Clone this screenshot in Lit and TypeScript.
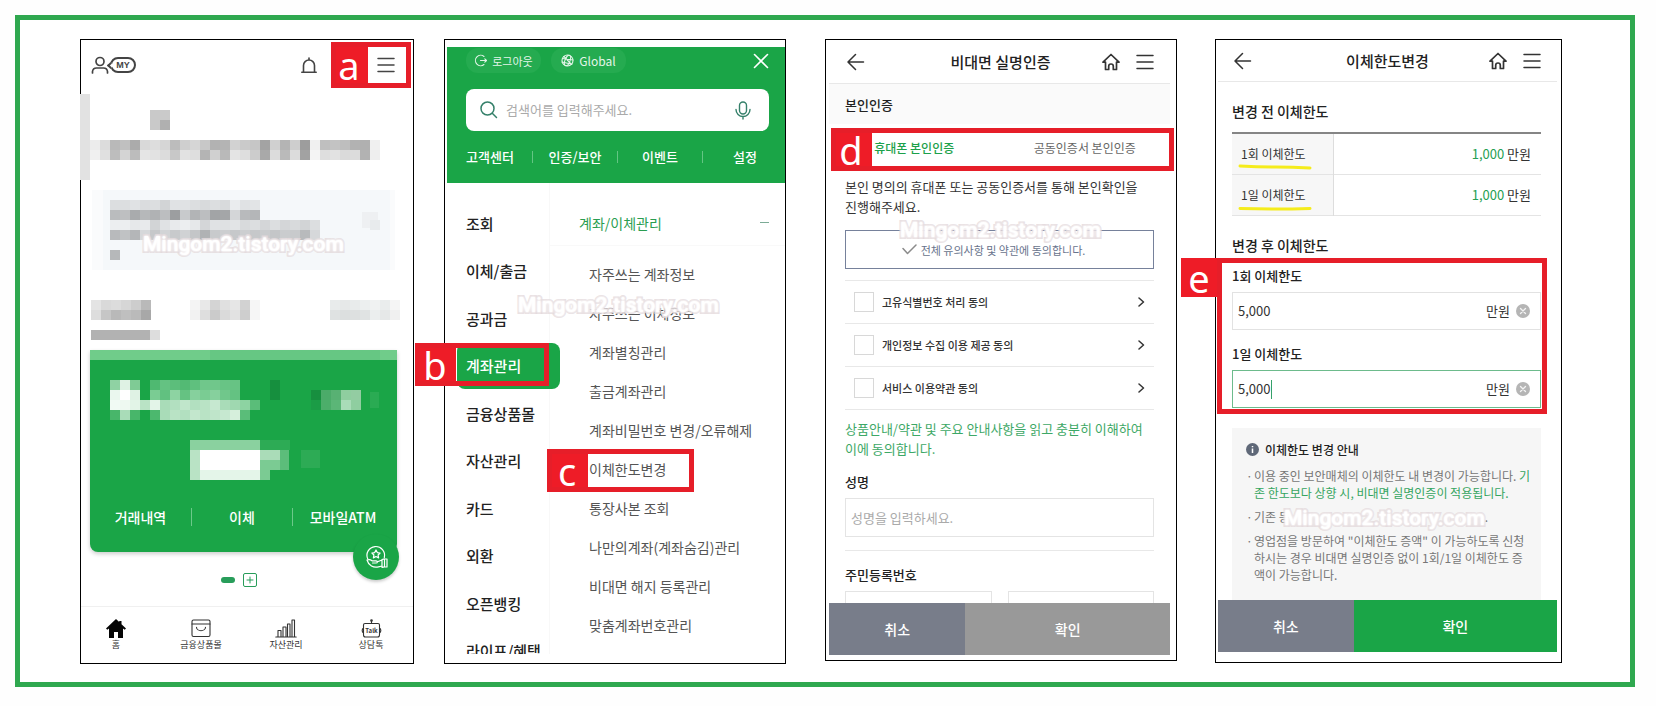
import { LitElement, html, svg, css, nothing } from "lit";
import { customElement } from "lit/decorators.js";
import { classMap } from "lit/directives/class-map.js";

type Block = [number, number, number, number, string];

const drawBlocks = (blocks: Block[]) =>
  blocks.map(([x, y, w, h, fill]) => svg`<rect x=${x} y=${y} width=${w} height=${h} fill=${fill}></rect>`);

/* One row of 10px cells, left to right. */
const strip = (y: number, x: number, shades: string): Block[] =>
  shades.split(" ").map((s, i) => [x + i * 10, y, 10, 10, "#" + s] as Block);

/* Pixelated area above the account card. */
const topBlocks: Block[] = [
  [80, 94, 10, 86, "#e2e2e2"],
  [150, 110, 10, 20, "#c9c9c9"], [160, 110, 10, 10, "#cacaca"], [160, 120, 10, 10, "#b0b0b0"],
  ...strip(140, 90, "ececec dcdcdc b9b9b9 c0c0c0 ababab d9d9d9 dddddd d6d6d6 bcbcbc cfcfcf d6d6d6 c8c8c8 b2b2b2 b4b4b4 d2d2d2 cacaca c6c6c6 a3a3a3 d0d0d0 b4b4b4 cecece 9d9d9d f0f0f0 bfbfbf c3c3c3 bebebe b2b2b2 b0b0b0 f0f0f0"),
  ...strip(150, 90, "f0f0f0 e0e0e0 bdbdbd d4d4d4 bcbcbc e5e5e5 e2e2e2 dcdcdc c8c8c8 e2e2e2 dedede b4b4b4 d0d0d0 b9b9b9 e4e4e4 dedede cccccc a9a9a9 dcdcdc bababa dcdcdc a2a2a2 f4f4f4 dedede e2e2e2 dadada dcdcdc b2b2b2 eeeeee"),
  [92, 190, 303, 80, "#fafbfc"], [103, 190, 287, 80, "#f5f8fa"],
  ...strip(200, 110, "dcdee0 dcdee0 e0e2e4 dadcde dcdee0 d2d4d6 e0e2e4 e0e2e4 dcdee0 d8dadc dcdee0 d8dadc eaecee e0e2e4 e2e4e6"),
  ...strip(210, 110, "babcbe bebfc1 a9abad b6b8ba b0b2b4 bcbec0 9c9ea0 c8cacc b2b4b6 bcbec0 a2a4a6 a4a6a8 d4d6d8 b8babc b4b6b8"),
  ...strip(220, 110, "eceef0 eceef0 e6e8ea e8eaec d2d4d6 e0e2e4 e8eaec eceef0 e6e8ea d4d6d8 e0e2e4 dfe1e3 e2e4e6 d8dadc dcdee0 d4d6d8 dcdee0 d4d6d8 d8dadc d2d4d6 dcdee0"),
  ...strip(230, 110, "b8babc c0c2c4 b4b6b8 d6d8da c6c8ca d2d4d6 c8cacc d0d2d4 c4c6c8 b0b2b4 c8cacc ccced0 c6c8ca ccced0 c6c8ca caccce c4c6c8 caccce c8cacc b8babc d6d8da"),
  [110, 250, 10, 10, "#b6b8ba"], [362, 212, 16, 16, "#eef0f2"], [370, 220, 10, 10, "#e8ebed"],
  ...strip(300, 91, "e4e4e4 d9d9d9 dcdcdc d6d6d6 cdcdcd b9b9b9"),
  ...strip(310, 91, "dddddd c6c6c6 b9b9b9 bfbfbf bababa a8a8a8"),
  ...strip(300, 190, "f4f4f4 e8e8e8 d4d4d4 e0e0e0 e6e6e6 d2d2d2 f6f6f6"),
  ...strip(310, 190, "f2f2f2 dedede cbcbcb dadada e2e2e2 cecece f6f6f6"),
  ...strip(300, 330, "e8ebeb e6e8e8 e8ebeb ecefef f0f2f2 eaeded f5f5f5"),
  ...strip(310, 330, "dfe2e2 dcdfdf dde0e0 e0e3e3 ebeeee e6e8e8 f0f0f0"),
  [91, 330, 59, 10, "#b2b2b2"], [150, 330, 10, 10, "#dddddd"],
];

const cardBlocks: Block[] = [
  [90, 350, 307, 10, "#70cc8a"], [210, 350, 170, 10, "#66c783"],
  ...strip(380, 110, "8fd2a3 dff2e4 7fcb95"), ...strip(390, 110, "eaf7ee ffffff dff2e4"), ...strip(400, 110, "f1faf4 eef9f1 e2f4e7"),
  [120, 410, 10, 10, "#a9dcb8"], [110, 410, 10, 10, "#48b66a"], [130, 410, 10, 10, "#48b66a"],
  ...strip(380, 150, "4fb971 64c282 5cbe7b 53ba74 5fc07e 70c78b 70c78b 68c485 67c384"),
  ...strip(390, 150, "7acc93 61c180 8dd3a2 65c282 86d09d 7acc93 86d09d 70c78b 64c282"),
  ...strip(400, 140, "b9e3c5 e3f4e8 a9dcb8 b2e0c0 c0e6cb b2e0c0 b9e3c5 c6e8d0 a9dcb8 9fd8b0 8dd3a2 5abd79"),
  ...strip(410, 150, "4cb86e a9dcb8 b9e3c5 b2e0c0 c3e7cd b9e3c5 bfe5ca c6e8d0 d6efdc 5abd79"),
  [270, 380, 10, 20, "#168f3e"],
  ...strip(390, 311, "178f3f 4bab69 58b173 8fce9f 93cca2"), ...strip(400, 311, "1b9c46 4cae6a 5bb677 a9dcb8 8fcea0"),
  [370, 392, 9, 16, "#2aab53"],
  [190, 440, 70, 10, "#8ad19f"], [190, 450, 10, 30, "#b9e3c5"], [260, 440, 30, 10, "#2dab55"],
  [200, 450, 60, 20, "#ffffff"], [200, 470, 60, 10, "#e4f5e9"],
  [260, 450, 20, 10, "#aadcb8"], [280, 450, 9, 20, "#5cbd7a"], [260, 460, 20, 10, "#7bcb93"], [260, 470, 10, 10, "#7bcb93"],
  [301, 450, 19, 18, "#2dab55"],
];

const line = (body: unknown, w = 18, h = 18, sw = 1.5) => html`<svg
  class="icon" width=${w} height=${h} viewBox="0 0 ${w} ${h}" fill="none" stroke="currentColor"
  stroke-width=${sw} stroke-linecap="round" stroke-linejoin="round" aria-hidden="true">${body}</svg>`;

const icons = {
  menu: () => line(svg`<path d="M1 2.500h16M1 9h16M1 15.500h16"/>`),
  back: () => line(svg`<path d="M16.500 9H1.500M8.500 1.500 1 9 8.500 16.500"/>`),
  house: () => line(svg`<path d="M1 9.200 9 1.500l8 7.700h-2.500V16.500h-3.200v-3.200a2.300 2.300 0 0 0-4.600 0v3.200H3.500V9.200z"/>`, 18, 18, 1.7),
  user: () => line(svg`<circle cx="9" cy="5.500" r="4"/><path d="M1.500 17v-1.500a4 4 0 0 1 4-3.500h7a4 4 0 0 1 4 3.500V17"/>`, 18, 18, 1.7),
  bell: () => line(svg`<path d="M8 1v1.500M2.500 15V8.500a5.500 5.500 0 0 1 11 0V15M.8 15.200h14.400"/>`, 16, 17, 1.6),
  close: () => line(svg`<path d="M1.500 1.500l13 13M14.500 1.500l-13 13"/>`, 16, 16, 1.6),
  search: () => line(svg`<circle cx="7.500" cy="7.500" r="6.500"/><path d="M12.500 12.500l4 4"/>`, 18, 18, 1.5),
  mic: () => line(svg`<rect x="4.500" y="1" width="7" height="12" rx="3.500"/><path d="M1 8.500a7 7 0 0 0 14 0M8 15.500V18"/>`, 16, 19, 1.4),
  logout: () => line(svg`<path d="M10 2.500a5.200 5.200 0 1 0 0 8M6.500 6.500h6M10.800 4.800l1.700 1.700-1.700 1.700"/>`, 13, 13, 1.1),
  globe: () => line(svg`<circle cx="6.500" cy="6.500" r="5.500"/><ellipse cx="6.500" cy="6.500" rx="2.500" ry="5.500" transform="rotate(20 6.500 6.500)"/><path d="M1.500 4.500l10.500 1.500M1 8l10 2.200M3 2.500l7.500 8"/>`, 13, 13, 1.1),
  tick: () => line(svg`<path d="M1 4.500l4.500 5L14 1"/>`, 15, 11, 1.5),
  chevron: () => line(svg`<path d="M1 1l4.500 4L1 9"/>`, 7, 10, 1.5),
  clear: () => html`<svg class="icon" width="14" height="14" viewBox="0 0 14 14" aria-hidden="true"><circle cx="7" cy="7" r="7" fill="#b5b5b5"/><path d="M4.500 4.500l5 5M9.500 4.500l-5 5" stroke="#f4f4f4" stroke-width="1.300" stroke-linecap="round"/></svg>`,
  info: () => html`<svg class="icon" width="13" height="13" viewBox="0 0 13 13" aria-hidden="true"><circle cx="6.500" cy="6.500" r="6.500" fill="#5f6878"/><path d="M6.500 3v1.200M6.500 5.600v4.400" stroke="#fff" stroke-width="1.500"/></svg>`,
  reward: () => line(svg`<path d="M2.800 14A8.800 8.800 0 1 1 19.300 12.500"/><path d="M11 5l1.300 2.600 2.800.4-2 2 .5 2.900-2.600-1.400-2.600 1.400.5-2.900-2-2 2.800-.4z"/><path d="M2 15c2-.8 3.800-.3 5 .8h4c1.800 0 1.800 2.200 0 2.200H7.500M12.500 16.800l4.500-1.800M2 15c1.500 5.500 6.500 8 11.500 6.800l3.500-.8M17 14.500l2.500-.7v8l-2.500.5zM19.500 14h2.500v8h-2.500"/>`, 23, 24, 1.2),
  shop: () => line(svg`<rect x="1" y="1" width="18" height="16.500" rx="1.500"/><path d="M1 5h18M5.500 8.200a4.500 3.500 0 0 0 9 0"/>`, 20, 19, 1.1),
  chart: () => line(svg`<path d="M.8 18h20.400M3 18v-6.500h3V18M8 18V8h3v10M12.500 18V5h2.500v13M17 18V1h2.500v17"/>`, 22, 19, 1.1),
  homeFilled: () => html`<svg class="icon" width="20" height="19" viewBox="0 0 20 19" aria-hidden="true"><path d="M10 0 0 9.500l1.300 1.300L3 9.600V19h5v-6h4v6h5V9.600l1.700 1.200L20 9.500l-4.500-4.300V2h-2.300v1z" fill="#050505"/></svg>`,
  talk: () => line(svg`<path d="M11.500 4V1.500M5 4.500h13a1.500 1.500 0 0 1 1.500 1.500v10a2 2 0 0 1-2 2h-12a2 2 0 0 1-2-2V6A1.500 1.500 0 0 1 5 4.500zM3.500 9a3 3 0 0 0 0 5M19.500 9a3 3 0 0 1 0 5"/><circle cx="11.500" cy="1.500" r=".8"/><text x="11.500" y="14" text-anchor="middle" font-size="6" font-weight="700" fill="currentColor" stroke="none">Talk</text>`, 23, 19, 1.1),
};

const mark = (name: string) => html`<span class="mark mark-${name}" aria-hidden="true"><span class="tag">${name}</span></span>`;
const watermark = (n: number) => html`<span class="watermark watermark-${n}">Mingom2.tistory.com</span>`;

@customElement("app-root")
export class AppRoot extends LitElement {
  static styles = css`
    :host {
      display: block;
      padding: 15px 21px 19px 15px;
      background: #fefefe;
      color: #333;
      font: 13px/20px "Noto Sans CJK KR", "Noto Sans", sans-serif;
      --green: #1aa547;
      --red: #e61e29;
    }
    *, *::before { box-sizing: border-box; }
    h1, h2, h3, p, ul { margin: 0; padding: 0; font: inherit; }
    ul { list-style: none; }
    a { color: inherit; text-decoration: none; }
    button { border: 0; padding: 0; background: none; font: inherit; color: inherit; }
    input { min-width: 0; border: 0; padding: 0; margin: 0; background: none; font: inherit; color: inherit; outline: 0; }
    .icon { display: block; flex: none; }

    .frame {
      display: grid;
      grid-template-columns: 334fr 342fr 361fr 355fr;
      align-items: start;
      gap: 30px;
      border: 5px solid #2fa84f;
      padding: 19px 68px 18px 60px;
      background: #fff;
    }
    .panel { position: relative; border: 1px solid #000; min-width: 0; background: #fff; }
    .panel-menu { padding: 7px 0 9px 2px; }
    .panel-verify { margin-left: 9px; padding: 0 6px 5px 3px; }
    .panel-limit { margin-left: 8px; padding: 0 4px 10px 2px; }

    .mark {
      position: absolute;
      z-index: 2;
      display: flex;
      border: 5px solid var(--red);
      pointer-events: none;
    }
    .tag {
      flex: none;
      width: 36px;
      padding-right: 6px;
      display: flex;
      align-items: center;
      justify-content: center;
      background: #ee1c27;
      color: #fff;
      font: 38px/32px "Noto Sans", sans-serif;
    }
    .mark-a { right: 2px; top: 2px; width: 80px; height: 46px; }
    .mark-a .tag { width: 32px; }
    .mark-b { left: -42px; top: 0; width: 134px; height: 43px; }
    .mark-c { left: -42px; top: -1px; width: 147px; height: 43px; }
    .mark-d { left: 5px; right: 2px; top: 88px; height: 43px; }
    .mark-e { left: 1px; right: 14px; top: 218px; height: 156px; }
    .mark-e .tag { position: absolute; left: -41px; top: -5px; height: 39px; padding: 0; }

    .watermark {
      position: absolute;
      z-index: 1;
      color: #fff;
      font: 500 21px/26px Roboto, sans-serif;
      -webkit-text-stroke: 4px #e3d8dbcc;
      paint-order: stroke fill;
      text-shadow: 0 0 2px #fff, 0 0 3px #fff;
      white-space: nowrap;
      pointer-events: none;
    }
    .watermark-1 { left: 62px; top: 191px; }
    .watermark-2 { left: 73px; top: 252px; }
    .watermark-3 { left: 74px; top: 177px; }
    .watermark-4 { left: 68px; top: 465px; }

    /* home screen */
    .home-bar { display: flex; align-items: center; height: 50px; padding: 0 18px 0 10px; color: #444; }
    .my {
      position: relative;
      margin-left: 1px;
      border: 2px solid #444;
      border-radius: 8px;
      width: 26px;
      height: 16px;
      font: 700 9px/12px "Liberation Sans", sans-serif;
      text-align: center;
    }
    .my::before {
      content: "";
      position: absolute;
      left: -4px;
      top: 4px;
      width: 5px;
      height: 5px;
      border: solid #444;
      border-width: 0 0 2px 2px;
      background: #fff;
      transform: rotate(45deg);
    }
    .bell { margin-left: auto; }
    .burger { margin-left: 60px; }
    .mosaic { display: block; width: 100%; overflow: visible; shape-rendering: crispEdges; }
    .account {
      position: relative;
      margin: 0 16px 0 9px;
      border-radius: 0 0 8px 8px;
      background: var(--green);
      box-shadow: 0 2px 4px #0003;
      color: #fff;
    }
    .account-links { display: grid; grid-template-columns: repeat(3, 1fr); padding: 8px 4px 26px 0; font-size: 14px; line-height: 18px; font-weight: 500; text-align: center; }
    .account-links a + a { border-left: 1px solid #6cc98a; }
    .fab {
      position: absolute;
      right: -2px;
      bottom: -28px;
      width: 46px;
      height: 46px;
      border-radius: 50%;
      background: var(--green);
      box-shadow: 0 2px 3px #0003;
      display: grid;
      place-items: center;
      color: #fff;
    }
    .pager { display: flex; align-items: center; justify-content: center; gap: 8px; height: 54px; padding: 2px 16px 0 0; }
    .pill { width: 14px; height: 6px; border-radius: 3px; background: #289d5a; }
    .plus { width: 14px; height: 14px; border: 1px solid #289d5a; border-radius: 2px; color: #289d5a; display: grid; place-items: center; }
    .tabbar { display: flex; justify-content: space-between; padding: 12px 12px 9px 5px; border-top: 1px solid #f0f0f0; }
    .tabbar a { display: flex; flex-direction: column; align-items: center; width: 60px; font-size: 9px; line-height: 14px; color: #333; height: 35px; }

    /* full menu screen */
    .menu-head { background: var(--green); color: #fff; padding: 1px 16px 20px 19px; }
    .menu-top { display: flex; align-items: center; gap: 10px; }
    .chip { display: flex; align-items: center; justify-content: center; gap: 5px; width: 75px; height: 25px; border-radius: 12px; background: #25ab50; color: #e4f5e9; font-size: 11px; }
    .chip-global { font-size: 12px; }
    .menu-top .close { margin-left: auto; }
    .search { display: flex; align-items: center; gap: 8px; height: 42px; margin: 16px 0 20px; padding: 0 18px 0 14px; border-radius: 8px; background: #fff; color: #35806a; }
    .search input { flex: 1; color: #333; }
    .search input::placeholder { color: #aaa; opacity: 1; }
    .menu-links { display: grid; grid-template-columns: 66fr 85fr 85fr 67fr; text-align: center; line-height: 12px; font-weight: 500; }
    .menu-links a + a { border-left: 1px solid #63c583; }
    .menu-links a:first-child { text-align: left; }
    .menu-links a:last-child { text-align: right; padding-right: 12px; }
    .menu-body { display: grid; grid-template-columns: 103px 1fr; clip-path: inset(0 0 0 -40px); }
    .groups { display: flex; flex-direction: column; justify-content: space-between; padding: 18px 0 0 10px; margin-bottom: -20px; border-right: 1px solid #f8f8f8; font-size: 15px; font-weight: 500; color: #222; }
    .groups li { position: relative; }
    .groups a { display: block; padding-left: 9px; line-height: 46px; white-space: nowrap; }
    .groups .current a { margin-right: -11px; border-radius: 8px; background: var(--green); color: #fff; }
    .entries { padding: 17px 0 9px; font-size: 14px; color: #555; }
    .entries h2 { display: flex; justify-content: space-between; align-items: center; height: 46px; margin-bottom: 9px; padding: 0 16px 0 29px; border-bottom: 1px solid #f9f9f9; color: #2a9d50; }
    .entries h2 i { width: 9px; height: 1px; background: #7cab96; }
    .entries li { position: relative; margin-left: 39px; line-height: 39px; white-space: nowrap; }

    /* shared form screens */
    .bar { display: grid; grid-template-columns: 1fr auto 1fr; align-items: center; height: 44px; padding: 0 16px 0 18px; border-bottom: 1px solid #e8e8e8; color: #333; }
    .bar h1 { font-size: 15px; font-weight: 500; color: #222; }
    .bar-right { display: flex; justify-content: flex-end; gap: 16px; }
    .actions { display: grid; grid-template-columns: 2fr 3fr; color: #fff; font-size: 14px; font-weight: 500; }
    .actions button { height: 52px; background: #999; }
    .actions .cancel { background: #787d8a; }
    .actions .go { background: var(--green); }
    .strong { font-weight: 500; color: #222; }

    /* identity check screen */
    .band { padding: 11px 16px 9px; background: #fafafa; }
    .tabs { display: grid; grid-template-columns: 1fr 1fr; padding: 14px 0 14px; font-size: 12px; color: #666; }
    .tabs .on { color: #1ca14a; font-weight: 500; }
    .form { padding: 5px 16px 0 16px; }
    .agree-all { display: flex; align-items: center; justify-content: center; gap: 4px; width: 100%; height: 39px; margin: 13px 0 11px; padding-right: 12px; border: 1px solid #76819b; color: #68738c; font-size: 11px; }
    .agree-all svg { color: #8b8b8b; }
    .terms { border-top: 1px solid #e8e8e8; }
    .terms li { display: flex; align-items: center; height: 43px; padding: 0 9px; border-bottom: 1px solid #e8e8e8; font-size: 11px; }
    .terms input { appearance: none; width: 20px; height: 20px; margin-right: 8px; border: 1px solid #d8d8d8; background: #fff; }
    .terms label { flex: 1; font-weight: 500; color: #333; }
    .notice { padding: 9px 0 13px; color: #3da866; }
    .box { width: 100%; height: 39px; margin: 6px 0 13px; border: 1px solid #e4e4e4; padding: 0 5px; display: block; }
    .box::placeholder { color: #aaa; opacity: 1; }
    .resident { border-top: 1px solid #e8e8e8; padding-top: 14px; }
    .cut { display: grid; grid-template-columns: 1fr 1fr; gap: 16px; height: 12px; margin-top: 6px; overflow: hidden; }
    .cut .box { margin: 0; }

    /* transfer limit screen */
    .panel-limit .bar { height: 42px; padding-left: 16px; }
    .limits { padding: 19px 16px 0 14px; }
    .limits h2 { font-size: 14px; }
    .before { width: 100%; margin: 11px 0 19px; border-collapse: collapse; border-top: 2px solid #858585; }
    .before th { position: relative; width: 33%; padding: 0 0 0 9px; background: #f7f7f7; border-right: 1px solid #ddd; text-align: left; font-weight: 400; font-size: 12px; }
    .before td { padding: 0 10px; text-align: right; }
    .before tr { height: 41px; border-bottom: 1px solid #e4e4e4; }
    .before em { font-style: normal; color: #26a052; }
    .underline { position: absolute; left: 6px; bottom: 4px; }
    .field { padding-top: 11px; }
    .field + .field { padding-top: 14px; }
    .amount { position: relative; display: flex; align-items: center; height: 38px; margin-top: 6px; padding: 0 10px 0 5px; border: 1px solid #e2e2e2; }
    .amount input { flex: 1; }
    .amount button { margin-left: 6px; }
    .amount.focused { border-color: #6dbb8c; }
    .caret { position: absolute; left: 38px; top: 9px; width: 1px; height: 19px; background: #35a06a; }
    .guide { margin-top: 20px; padding: 12px 8px 16px 14px; background: #f6f6f6; font-size: 12px; line-height: 17px; color: #777; }
    .guide h3 { display: flex; align-items: center; gap: 6px; line-height: 20px; margin-bottom: 7px; }
    .guide li { position: relative; padding-left: 8px; margin-bottom: 7px; white-space: nowrap; }
    .guide li::before { content: "·"; position: absolute; left: 0; }
    .guide b { font-weight: 400; color: #35a560; }
    .guide .split { display: flex; justify-content: space-between; padding-right: 45px; }
    .guide ul { margin-bottom: -7px; padding-bottom: 1px; }
  `;

  private groups = ["조회", "이체/출금", "공과금", "계좌관리", "금융상품몰", "자산관리", "카드", "외환", "오픈뱅킹", "라이프/혜택"];
  private entries = ["자주쓰는 계좌정보", "자주쓰는 이체정보", "계좌별칭관리", "출금계좌관리", "계좌비밀번호 변경/오류해제", "이체한도변경", "통장사본 조회", "나만의계좌(계좌숨김)관리", "비대면 해지 등록관리", "맞춤계좌번호관리"];
  private terms = ["고유식별번호 처리 동의", "개인정보 수집 이용 제공 동의", "서비스 이용약관 동의"];

  private home() {
    const tabs = [["홈", icons.homeFilled], ["금융상품몰", icons.shop], ["자산관리", icons.chart], ["상담톡", icons.talk]] as const;
    return html`<section class="panel panel-home">
      <header class="home-bar">
        ${icons.user()}
        <button class="my">MY</button>
        <button class="bell" aria-label="알림">${icons.bell()}</button>
        <button class="burger" aria-label="전체메뉴">${icons.menu()}</button>
      </header>
      <svg class="mosaic" viewBox="81 90 332 260" aria-hidden="true">${drawBlocks(topBlocks)}</svg>
      <div class="account">
        <svg class="mosaic" viewBox="90 350 307 150" aria-hidden="true">${drawBlocks(cardBlocks)}</svg>
        <nav class="account-links"><a href="#">거래내역</a><a href="#">이체</a><a href="#">모바일ATM</a></nav>
        <button class="fab" aria-label="혜택">${icons.reward()}</button>
      </div>
      <div class="pager"><span class="pill"></span><button class="plus" aria-label="추가">${line(svg`<path d="M4 1v6M1 4h6"/>`, 8, 8, 1)}</button></div>
      <nav class="tabbar">${tabs.map(([t, icon]) => html`<a href="#">${icon()}<span>${t}</span></a>`)}</nav>
      ${mark("a")}${watermark(1)}
    </section>`;
  }

  private menu() {
    return html`<section class="panel panel-menu">
      <header class="menu-head">
        <div class="menu-top">
          <button class="chip">${icons.logout()}로그아웃</button>
          <button class="chip chip-global">${icons.globe()}Global</button>
          <button class="close" aria-label="닫기">${icons.close()}</button>
        </div>
        <div class="search">
          ${icons.search()}
          <input type="text" aria-label="검색" placeholder="검색어를 입력해주세요." />
          <button aria-label="음성 검색">${icons.mic()}</button>
        </div>
        <nav class="menu-links">
          <a href="#">고객센터</a><a href="#">인증/보안</a><a href="#">이벤트</a><a href="#">설정</a>
        </nav>
      </header>
      <div class="menu-body">
        <ul class="groups">
          ${this.groups.map((g) => html`<li class=${classMap({ current: g === "계좌관리" })}><a href="#">${g}</a>${g === "계좌관리" ? mark("b") : nothing}</li>`)}
        </ul>
        <div class="entries">
          <h2>계좌/이체관리<i></i></h2>
          <ul>${this.entries.map((e) => html`<li><a href="#">${e}</a>${e === "이체한도변경" ? mark("c") : nothing}</li>`)}</ul>
        </div>
      </div>
      ${watermark(2)}
    </section>`;
  }

  private bar(title: string) {
    return html`<header class="bar">
      <button aria-label="뒤로">${icons.back()}</button>
      <h1>${title}</h1>
      <div class="bar-right">
        <button aria-label="홈">${icons.house()}</button>
        <button aria-label="전체메뉴">${icons.menu()}</button>
      </div>
    </header>`;
  }

  private verify() {
    return html`<section class="panel panel-verify">
      ${this.bar("비대면 실명인증")}
      <h2 class="band strong">본인인증</h2>
      <div class="tabs"><button class="on">휴대폰 본인인증</button><button>공동인증서 본인인증</button></div>
      <div class="form">
        <p>본인 명의의 휴대폰 또는 공동인증서를 통해 본인확인을<br />진행해주세요.</p>
        <button class="agree-all">${icons.tick()}전체 유의사항 및 약관에 동의합니다.</button>
        <ul class="terms">
          ${this.terms.map((t, i) => html`<li><input type="checkbox" id="term${i}" /><label for="term${i}">${t}</label><button aria-label="${t} 보기">${icons.chevron()}</button></li>`)}
        </ul>
        <p class="notice">상품안내/약관 및 주요 안내사항을 읽고 충분히 이해하여<br />이에 동의합니다.</p>
        <label class="strong" for="name">성명</label>
        <input class="box" id="name" type="text" placeholder="성명을 입력하세요." />
        <div class="resident">
          <label class="strong" for="rrn">주민등록번호</label>
          <div class="cut"><input class="box" id="rrn" type="text" /><input class="box" type="password" aria-label="주민등록번호 뒷자리" /></div>
        </div>
      </div>
      <footer class="actions"><button class="cancel">취소</button><button>확인</button></footer>
      ${mark("d")}${watermark(3)}
    </section>`;
  }

  private limitRow(name: string, path: string) {
    return html`<tr>
      <th scope="row">${name}<svg class="underline" width="74" height="6" viewBox="0 0 74 6" aria-hidden="true"><path d=${path} fill="none" stroke="#f5ec1c" stroke-width="3" stroke-linecap="round" /></svg></th>
      <td><em>1,000</em> 만원</td>
    </tr>`;
  }

  private field(id: string, name: string, focused: boolean) {
    return html`<div class="field">
      <label class="strong" for=${id}>${name}</label>
      <div class=${classMap({ amount: true, focused })}>
        <input id=${id} type="text" inputmode="numeric" value="5,000" />${focused ? html`<span class="caret"></span>` : nothing}
        <span>만원</span><button aria-label="지우기">${icons.clear()}</button>
      </div>
    </div>`;
  }

  private limit() {
    return html`<section class="panel panel-limit">
      ${this.bar("이체한도변경")}
      <div class="limits">
        <h2 class="strong">변경 전 이체한도</h2>
        <table class="before"><tbody>
          ${this.limitRow("1회 이체한도", "M2 2q20 1 36 1t34 1")}
          ${this.limitRow("1일 이체한도", "M2 3.500q34 1 70 0")}
        </tbody></table>
        <h2 class="strong">변경 후 이체한도</h2>
        ${this.field("once", "1회 이체한도", false)}
        ${this.field("daily", "1일 이체한도", true)}
        <div class="guide">
          <h3 class="strong">${icons.info()}이체한도 변경 안내</h3>
          <ul>
            <li>이용 중인 보안매체의 이체한도 내 변경이 가능합니다. <b>기<br />존 한도보다 상향 시, 비대면 실명인증이 적용됩니다.</b></li>
            <li class="split"><span>기존 등</span><span>.</span></li>
            <li>영업점을 방문하여 "이체한도 증액" 이 가능하도록 신청<br />하시는 경우 비대면 실명인증 없이 1회/1일 이체한도 증<br />액이 가능합니다.</li>
          </ul>
        </div>
      </div>
      <footer class="actions"><button class="cancel">취소</button><button class="go">확인</button></footer>
      ${mark("e")}${watermark(4)}
    </section>`;
  }

  render() {
    return html`<main class="frame">${this.home()}${this.menu()}${this.verify()}${this.limit()}</main>`;
  }
}
